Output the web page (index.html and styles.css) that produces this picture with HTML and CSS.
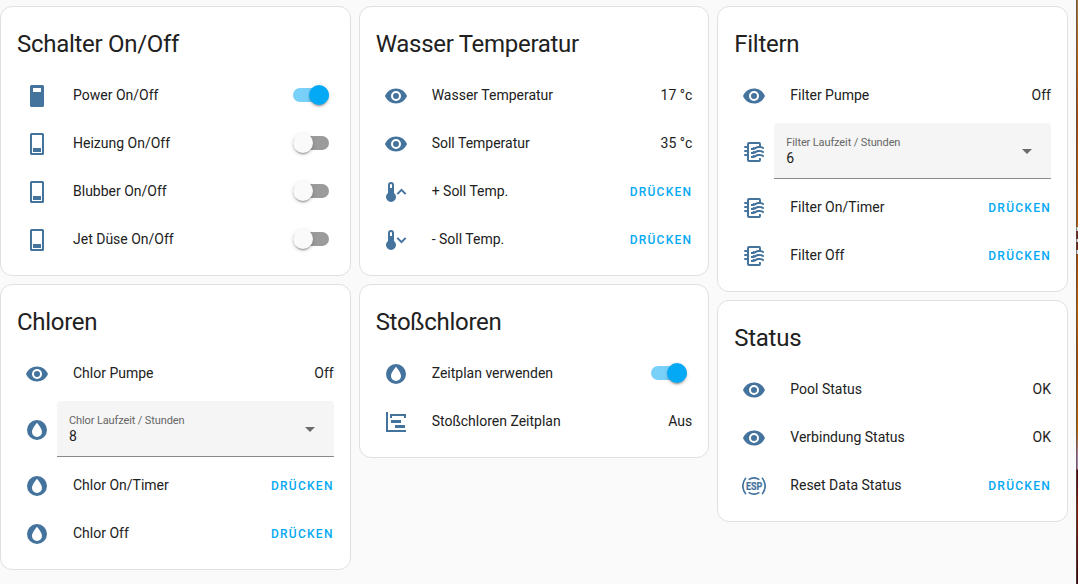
FILE: index.html
```
<!DOCTYPE html>
<html lang="de">
<head>
<meta charset="utf-8">
<title>Pool</title>
<link rel="stylesheet" href="styles.css">
</head>
<body>
<svg class="defs" width="0" height="0">
  <symbol id="on" viewBox="0 0 24 24"><path fill-rule="evenodd" d="M6.500 1H17.500A1.500 1.500 0 0 1 19 2.500V21.500A1.500 1.500 0 0 1 17.500 23H6.500A1.500 1.500 0 0 1 5 21.500V2.500A1.500 1.500 0 0 1 6.500 1M8 4V8H16V4Z"/></symbol>
  <symbol id="off" viewBox="0 0 24 24"><path fill-rule="evenodd" d="M6.500 1H17.500A1.500 1.500 0 0 1 19 2.500V21.500A1.500 1.500 0 0 1 17.500 23H6.500A1.500 1.500 0 0 1 5 21.500V2.500A1.500 1.500 0 0 1 6.500 1M7 3V21H17V3ZM8 16H16V20H8Z"/></symbol>
  <symbol id="eye" viewBox="0 0 24 24"><path d="M12,9A3,3 0 0,0 9,12A3,3 0 0,0 12,15A3,3 0 0,0 15,12A3,3 0 0,0 12,9M12,17A5,5 0 0,1 7,12A5,5 0 0,1 12,7A5,5 0 0,1 17,12A5,5 0 0,1 12,17M12,4.5C7,4.5 2.73,7.61 1,12C2.73,16.39 7,19.5 12,19.5C17,19.5 21.27,16.39 23,12C21.27,7.61 17,4.5 12,4.5Z"/></symbol>
  <symbol id="therm" viewBox="0 0 24 24"><path fill-rule="evenodd" d="M10 13V5A3 3 0 0 0 4 5V13A5 5 0 1 0 10 13M7 4A1 1 0 0 1 8 5V8H6V5A1 1 0 0 1 7 4Z"/></symbol>
  <symbol id="up" viewBox="0 0 24 24"><use href="#therm"/><path class="line" d="M13.300 14.100L17.500 9.900L21.700 14.100"/></symbol>
  <symbol id="down" viewBox="0 0 24 24"><use href="#therm"/><path class="line" d="M13.300 9.900L17.500 14.100L21.700 9.900"/></symbol>
  <symbol id="filter" viewBox="0 0 24 24"><path d="M19,18.31V20A2,2 0 0,1 17,22H7A2,2 0 0,1 5,20V16.3C4.54,16.12 3.95,16 3,16A1,1 0 0,1 2,15A1,1 0 0,1 3,14C3.82,14 4.47,14.08 5,14.21V12.3C4.54,12.12 3.95,12 3,12A1,1 0 0,1 2,11A1,1 0 0,1 3,10C3.82,10 4.47,10.08 5,10.21V8.3C4.54,8.12 3.95,8 3,8A1,1 0 0,1 2,7A1,1 0 0,1 3,6C3.82,6 4.47,6.08 5,6.21V4A2,2 0 0,1 7,2H17A2,2 0 0,1 19,4V6.16C20.78,6.47 21.54,7.13 21.71,7.29C22.1,7.68 22.1,8.32 21.71,8.71C21.32,9.1 20.8,9.09 20.29,8.71C20.29,8.71 19.25,8 17,8C15.74,8 14.91,8.41 13.95,8.9C12.91,9.41 11.74,10 10,10C9.64,10 9.31,10 9,9.96V7.95C9.3,8 9.63,8 10,8C11.26,8 12.09,7.59 13.05,7.11C14.09,6.59 15.27,6 17,6V4H7V20H17V18C18.5,18 18.97,18.29 19,18.31M17,10C15.27,10 14.09,10.59 13.05,11.11C12.09,11.59 11.26,12 10,12C9.63,12 9.3,12 9,11.95V13.96C9.31,14 9.64,14 10,14C11.74,14 12.91,13.41 13.95,12.9C14.91,12.42 15.74,12 17,12C19.25,12 20.29,12.71 20.29,12.71C20.8,13.1 21.32,13.1 21.71,12.71C22.1,12.32 22.1,11.69 21.71,11.29C21.5,11.08 20.25,10 17,10M17,14C15.27,14 14.09,14.59 13.05,15.11C12.09,15.59 11.26,16 10,16C9.63,16 9.3,16 9,15.95V17.96C9.31,18 9.64,18 10,18C11.74,18 12.91,17.41 13.95,16.9C14.91,16.42 15.74,16 17,16C19.25,16 20.29,16.71 20.29,16.71C20.8,17.1 21.32,17.1 21.71,16.71C22.1,16.32 22.1,15.69 21.71,15.29C21.5,15.08 20.25,14 17,14Z"/></symbol>
  <symbol id="water" viewBox="0 0 24 24"><path fill-rule="evenodd" d="M12 2A10 10 0 1 0 12 22A10 10 0 1 0 12 2M12 4.800C12 4.800 17 10.400 17 14A5 5 0 0 1 7 14C7 10.400 12 4.800 12 4.800Z"/></symbol>
  <symbol id="gantt" viewBox="0 0 24 24"><path d="M2,2H4V20H22V22H2V2M7,10H17V13H7V10M11,15H21V18H11V15M6,4H22V8H20V6H8V8H6V4Z"/></symbol>
</svg>
<div class="page">
  <main class="columns">
    <div class="column">
      <section class="card">
        <h1 class="title">Schalter On/Off</h1>
        <div class="rows">
          <div class="row"><svg class="icon"><use href="#on"/></svg><span class="name">Power On/Off</span><span class="switch checked"><span class="thumb"></span></span></div>
          <div class="row"><svg class="icon"><use href="#off"/></svg><span class="name">Heizung On/Off</span><span class="switch"><span class="thumb"></span></span></div>
          <div class="row"><svg class="icon"><use href="#off"/></svg><span class="name">Blubber On/Off</span><span class="switch"><span class="thumb"></span></span></div>
          <div class="row"><svg class="icon"><use href="#off"/></svg><span class="name">Jet Düse On/Off</span><span class="switch"><span class="thumb"></span></span></div>
        </div>
      </section>
      <section class="card">
        <h1 class="title">Chloren</h1>
        <div class="rows">
          <div class="row"><svg class="icon"><use href="#eye"/></svg><span class="name">Chlor Pumpe</span><span class="value">Off</span></div>
          <div class="row"><svg class="icon"><use href="#water"/></svg><div class="select"><div class="field"><span class="label">Chlor Laufzeit / Stunden</span><span class="choice">8</span></div><span class="caret"></span></div></div>
          <div class="row"><svg class="icon"><use href="#water"/></svg><span class="name">Chlor On/Timer</span><span class="press">DRÜCKEN</span></div>
          <div class="row"><svg class="icon"><use href="#water"/></svg><span class="name">Chlor Off</span><span class="press">DRÜCKEN</span></div>
        </div>
      </section>
    </div>
    <div class="column">
      <section class="card">
        <h1 class="title">Wasser Temperatur</h1>
        <div class="rows">
          <div class="row"><svg class="icon"><use href="#eye"/></svg><span class="name">Wasser Temperatur</span><span class="value">17 °c</span></div>
          <div class="row"><svg class="icon"><use href="#eye"/></svg><span class="name">Soll Temperatur</span><span class="value">35 °c</span></div>
          <div class="row"><svg class="icon"><use href="#up"/></svg><span class="name">+ Soll Temp.</span><span class="press">DRÜCKEN</span></div>
          <div class="row"><svg class="icon"><use href="#down"/></svg><span class="name">- Soll Temp.</span><span class="press">DRÜCKEN</span></div>
        </div>
      </section>
      <section class="card">
        <h1 class="title">Stoßchloren</h1>
        <div class="rows">
          <div class="row"><svg class="icon"><use href="#water"/></svg><span class="name">Zeitplan verwenden</span><span class="switch checked"><span class="thumb"></span></span></div>
          <div class="row"><svg class="icon"><use href="#gantt"/></svg><span class="name">Stoßchloren Zeitplan</span><span class="value">Aus</span></div>
        </div>
      </section>
    </div>
    <div class="column">
      <section class="card">
        <h1 class="title">Filtern</h1>
        <div class="rows">
          <div class="row"><svg class="icon"><use href="#eye"/></svg><span class="name">Filter Pumpe</span><span class="value">Off</span></div>
          <div class="row"><svg class="icon"><use href="#filter"/></svg><div class="select"><div class="field"><span class="label">Filter Laufzeit / Stunden</span><span class="choice">6</span></div><span class="caret"></span></div></div>
          <div class="row"><svg class="icon"><use href="#filter"/></svg><span class="name">Filter On/Timer</span><span class="press">DRÜCKEN</span></div>
          <div class="row"><svg class="icon"><use href="#filter"/></svg><span class="name">Filter Off</span><span class="press">DRÜCKEN</span></div>
        </div>
      </section>
      <section class="card">
        <h1 class="title">Status</h1>
        <div class="rows">
          <div class="row"><svg class="icon"><use href="#eye"/></svg><span class="name">Pool Status</span><span class="value">OK</span></div>
          <div class="row"><svg class="icon"><use href="#eye"/></svg><span class="name">Verbindung Status</span><span class="value">OK</span></div>
          <div class="row"><svg class="icon" viewBox="0 0 24 24"><path class="arc" d="M3.900 3.800Q-2.300 12 3.900 20.200M20.100 3.800Q26.300 12 20.100 20.200M6.600 5.600Q12 2.200 17.400 5.600M6.600 18.400Q12 21.800 17.400 18.400"/><text class="esp-text" x="3.900" y="15.500" textLength="16.400" lengthAdjust="spacingAndGlyphs">ESP</text></svg><span class="name">Reset Data Status</span><span class="press">DRÜCKEN</span></div>
        </div>
      </section>
    </div>
  </main>
  <div class="edge"></div>
</div>
</body>
</html>
```
FILE: styles.css
```
* { box-sizing: border-box; }
body {
  margin: 0;
  background: #fafafa;
  color: #212121;
  font: 14px/20px Roboto, sans-serif;
  overflow: hidden;
}
.defs { display: block; }
.page { display: flex; height: 584px; }
.columns {
  flex: none;
  width: 1068px;
  margin-right: 8px;
  padding-top: 6px;
  display: grid;
  grid-template-columns: repeat(3, 1fr);
  gap: 8px;
  align-items: start;
}
.column { display: flex; flex-direction: column; gap: 8px; }
.card {
  background: #fff;
  border: 1px solid #e0e0e0;
  border-radius: 12px;
  padding: 13px 16px 16px;
}
.title {
  margin: 0 0 7px;
  font-size: 24px;
  font-weight: 400;
  line-height: 48px;
  letter-spacing: -0.012em;
}
.rows { display: flex; flex-direction: column; gap: 8px; }
.row { display: flex; align-items: center; min-height: 40px; }
.icon {
  flex: none;
  width: 24px;
  height: 24px;
  margin: 2px 8px 0;
  fill: #44739e;
}
.line { fill: none; stroke: #44739e; stroke-width: 2; }
.arc { fill: none; stroke: #44739e; stroke-width: 1.6; }
.esp-text { font: 700 10px Roboto, sans-serif; stroke: #44739e; stroke-width: .2; }
.name { flex: 1; padding-left: 16px; }
.press {
  color: #03a9f4;
  font-size: 12px;
  font-weight: 500;
  letter-spacing: 1.25px;
  padding-top: 1px;
}
.switch {
  display: flex;
  align-items: center;
  width: 36px;
  height: 14px;
  margin-right: 5px;
  border-radius: 7px;
  background: #9b9b9b;
}
.thumb {
  width: 20px;
  height: 20px;
  border-radius: 50%;
  background: #fafafa;
  box-shadow: 0 3px 1px -2px rgba(0,0,0,.2), 0 2px 2px rgba(0,0,0,.14), 0 1px 5px rgba(0,0,0,.12);
}
.switch.checked { background: #79d1f9; justify-content: flex-end; }
.checked .thumb { background: #03a9f4; }
.select {
  flex: 1;
  height: 56px;
  display: flex;
  align-items: center;
  justify-content: space-between;
  padding: 0 19px 0 12px;
  background: #f5f5f5;
  border-bottom: 1px solid #8a8a8a;
  border-radius: 4px 4px 0 0;
}
.field { display: flex; flex-direction: column; padding-bottom: 1px; }
.label { font-size: 11px; letter-spacing: -0.12px; line-height: 17px; color: #666; }
.choice { line-height: 15px; }
.caret {
  margin-top: 2px;
  border: 5px solid transparent;
  border-top-color: #6b6b6b;
  border-bottom: 0;
}
.edge {
  width: 2px;
  background: linear-gradient(90deg, rgba(70,70,70,.6) 50%, transparent 50%),
    linear-gradient(#a7763f 0, #b56416 60px, #a84c12 120px, #b6600d 227px, #ddd 227px, #ddd 231px, #702815 231px, #702815 239px, #ddd 239px, #ddd 242px, #702815 242px, #702815 250px, #ddd 250px, #ddd 254px, #a84b08 254px, #bd6200 310px, #a34d08 360px, #b76400 430px, #a77da0 455px, #a77da0 469px, #4b0710 470px, #80210a 510px, #3c0910 584px);
}
```
